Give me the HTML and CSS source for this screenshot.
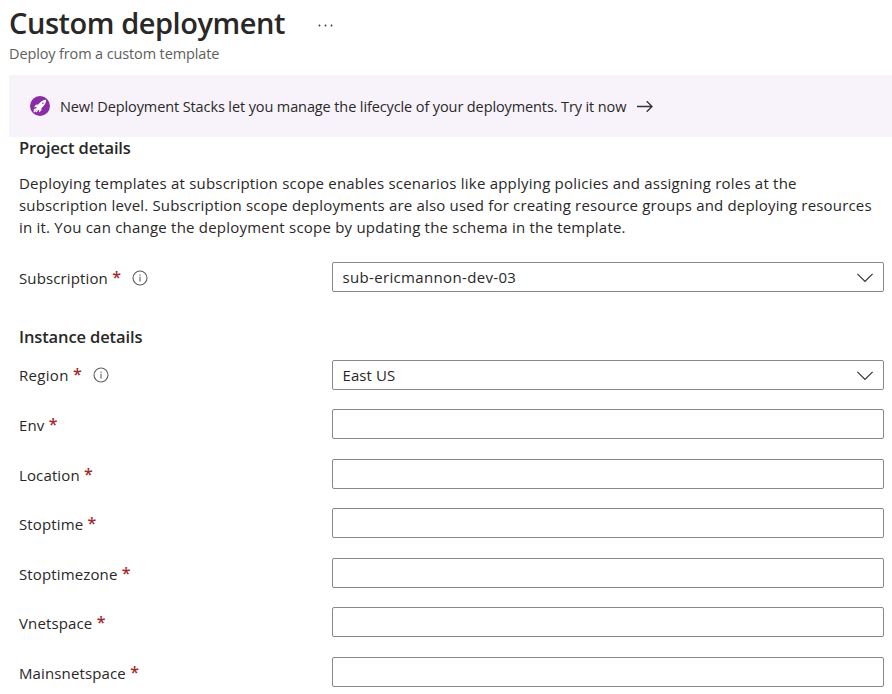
FILE: index.html
```html
<!DOCTYPE html>
<html lang="en">
<head>
<meta charset="utf-8">
<title>Custom deployment</title>
<link rel="stylesheet" href="styles.css">
</head>
<body>
<header class="header">
  <div class="title-row">
    <h1 class="title">Custom deployment</h1>
    <svg class="more" width="16" height="4" viewBox="0 0 16 4"><circle cx="2.500" cy="2.500" r=".9"/><circle cx="8.500" cy="2.500" r=".9"/><circle cx="14.500" cy="2.500" r=".9"/></svg>
  </div>
  <p class="subtitle">Deploy from a custom template</p>
</header>
<div class="banner">
  <svg class="rocket" width="20" height="20" viewBox="0 0 20 20">
    <circle cx="10" cy="10" r="10" fill="#8a2da5"/>
    <path fill="#fff" d="M16.200 3.800C13.400 4 11.200 5.100 9.600 7L8.200 8.500 6 8.700 4 11.200l2.700-.3-.7 1.500 2 2 1.300-.7-.3 2.800 2.400-2.200.1-2.400 1.600-1.500c2-1.700 2.900-3.800 3.100-6.600z"/>
    <circle cx="12.900" cy="7.200" r=".8" fill="#8a2da5"/>
    <path stroke="#fff" stroke-width="1.200" d="M7 13l-3.200 3.200M5.500 12.600l-1.700 1.700M7.600 14.400L6 16"/>
  </svg>
  <span class="banner-text">New! Deployment Stacks let you manage the lifecycle of your deployments. Try it now</span>
  <svg class="arrow" width="16" height="12" viewBox="0 0 16 12"><path d="M0 6.500h15M9.700 1.200L15 6.500l-5.300 5.300"/></svg>
</div>
<main class="form">
  <h2 class="section">Project details</h2>
  <p class="intro">
    <span class="line line-1">Deploying templates at subscription scope enables scenarios like applying policies and assigning roles at the</span>
    <span class="line line-2">subscription level. Subscription scope deployments are also used for creating resource groups and deploying resources</span>
    <span class="line line-3">in it. You can change the deployment scope by updating the schema in the template.</span>
  </p>
  <div class="row">
    <div class="label"><span class="name">Subscription</span><span class="req">*</span><svg class="info" width="16" height="16" viewBox="0 0 16 16"><circle cx="8" cy="8" r="7"/><path d="M8 6.800v4.600M8 4.500v1.200"/></svg></div>
    <div class="field"><span class="value value-sub">sub-ericmannon-dev-03</span><svg class="chevron" width="16" height="10" viewBox="0 0 16 10"><path d="M.4.9L8 8.500 15.600.9"/></svg></div>
  </div>
  <h2 class="section section-instance">Instance details</h2>
  <div class="rows">
    <div class="row">
      <div class="label label-region"><span class="name">Region</span><span class="req">*</span><svg class="info" width="16" height="16" viewBox="0 0 16 16"><circle cx="8" cy="8" r="7"/><path d="M8 6.800v4.600M8 4.500v1.200"/></svg></div>
      <div class="field field-region"><span class="value">East US</span><svg class="chevron" width="16" height="10" viewBox="0 0 16 10"><path d="M.4.9L8 8.500 15.600.9"/></svg></div>
    </div>
    <div class="row"><div class="label"><span class="name">Env</span><span class="req">*</span></div><div class="field"></div></div>
    <div class="row"><div class="label"><span class="name">Location</span><span class="req">*</span></div><div class="field"></div></div>
    <div class="row"><div class="label"><span class="name">Stoptime</span><span class="req">*</span></div><div class="field"></div></div>
    <div class="row"><div class="label"><span class="name">Stoptimezone</span><span class="req">*</span></div><div class="field"></div></div>
    <div class="row"><div class="label"><span class="name">Vnetspace</span><span class="req">*</span></div><div class="field"></div></div>
    <div class="row"><div class="label"><span class="name">Mainsnetspace</span><span class="req">*</span></div><div class="field"></div></div>
  </div>
</main>
</body>
</html>
```
FILE: styles.css
```css
* { box-sizing: border-box; }
body {
  margin: 0;
  height: 694px;
  overflow: hidden;
  background: #fff;
  color: #292827;
  font: 15px/22px "Open Sans", "Noto Sans", sans-serif;
}
h1, h2, p { margin: 0; }
span { white-space: nowrap; }
svg { flex: none; fill: none; }
.header { height: 75px; padding: 3px 0 0 9px; }
.title-row { display: flex; height: 40px; }
.title { width: 308px; font-size: 29px; line-height: 40px; font-weight: 600; letter-spacing: -.45px; white-space: nowrap; }
.more { margin-top: 20px; fill: #323130; }
.subtitle { font-size: 14.500px; line-height: 22px; letter-spacing: -.13px; color: #605e5c; }
.banner {
  display: flex;
  align-items: center;
  height: 62px;
  margin-left: 9px;
  padding-left: 21px;
  border-radius: 2px 0 0 2px;
  background: #f8f3fb;
}
.banner-text { width: 567px; margin-left: 10px; padding-top: 2px; font-size: 14.500px; letter-spacing: -.11px; }
.arrow { margin-left: 9.500px; stroke: #323130; stroke-width: 1.300; }
.form { padding-left: 19px; }
.section { font-size: 16.500px; line-height: 22px; font-weight: 600; letter-spacing: -.12px; }
.intro { margin: 13px 0 24px; }
.line { display: block; }
.line-1 { letter-spacing: .215px; }
.line-2 { letter-spacing: .175px; }
.line-3 { letter-spacing: .215px; }
.row { display: grid; grid-template-columns: 313px 552px; height: 30px; }
.label { display: flex; align-items: center; padding-top: 2px; }
.label-region { padding-top: 1px; }
.label-region .name { letter-spacing: .3px; }
.name { letter-spacing: .13px; }
.req { margin-left: 4.300px; width: 8px; padding-bottom: 2px; color: #a4262c; font-size: 16px; font-weight: 600; }
.info { margin-left: 12px; stroke: #605e5c; stroke-width: 1.100; }
.field {
  display: flex;
  align-items: center;
  justify-content: space-between;
  padding: 0 10px 0 9.500px;
  border: 1px solid #8a8886;
  border-radius: 2px;
}
.value { letter-spacing: .1px; }
.value-sub { letter-spacing: .34px; }
.chevron { stroke: #323130; stroke-width: 1.200; margin-top: 1px; }
.field-region .chevron { margin-top: 2.500px; }
.section-instance { margin-top: 34px; }
.rows { display: grid; row-gap: 19.500px; margin-top: 11.900px; }
```
